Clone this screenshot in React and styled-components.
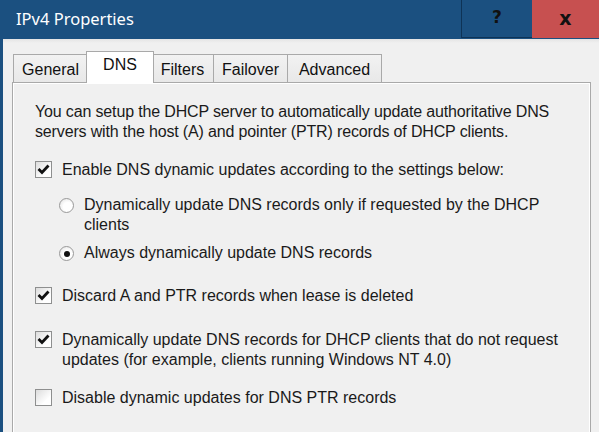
import React from 'react';
import styled, { createGlobalStyle } from 'styled-components';

const GlobalStyle = createGlobalStyle`
  html, body {
    margin: 0;
    padding: 0;
  }
  body {
    font-family: "Liberation Sans", Arial, sans-serif;
    background: #f0f0f0;
  }
`;

const TABS = ['General', 'DNS', 'Filters', 'Failover', 'Advanced'];
const TAB_WIDTHS = [75, 68, 63, 75, 95];

const App = () => {
  return (
    <StyledWindow>
      <GlobalStyle />
      <StyledTitleBar>
        <StyledTitle>IPv4 Properties</StyledTitle>
        <StyledCaptionButton $width={71}>?</StyledCaptionButton>
        <StyledCaptionButton $width={67} $close>
          x
        </StyledCaptionButton>
      </StyledTitleBar>

      <StyledBody>
        <StyledTabStrip>
          {TABS.map((tab, i) => (
            <StyledTab key={tab} $width={TAB_WIDTHS[i]} $selected={tab === 'DNS'}>
              {tab}
            </StyledTab>
          ))}
        </StyledTabStrip>

        <StyledPanel>
          <StyledText>
            You can setup the DHCP server to automatically update authoritative DNS
            <br />
            servers with the host (A) and pointer (PTR) records of DHCP clients.
          </StyledText>

          <StyledOption $top={18}>
            <Checkbox checked />
            <StyledLabel>Enable DNS dynamic updates according to the settings below:</StyledLabel>
          </StyledOption>

          <StyledOption $top={15} $indent>
            <Radio />
            <StyledLabel>
              Dynamically update DNS records only if requested by the DHCP
              <br />
              clients
            </StyledLabel>
          </StyledOption>

          <StyledOption $top={8} $indent>
            <Radio checked />
            <StyledLabel>Always dynamically update DNS records</StyledLabel>
          </StyledOption>

          <StyledOption $top={23}>
            <Checkbox checked />
            <StyledLabel>Discard A and PTR records when lease is deleted</StyledLabel>
          </StyledOption>

          <StyledOption $top={24}>
            <Checkbox checked />
            <StyledLabel>
              Dynamically update DNS records for DHCP clients that do not request
              <br />
              updates (for example, clients running Windows NT 4.0)
            </StyledLabel>
          </StyledOption>

          <StyledOption $top={18}>
            <Checkbox />
            <StyledLabel>Disable dynamic updates for DNS PTR records</StyledLabel>
          </StyledOption>
        </StyledPanel>
      </StyledBody>
    </StyledWindow>
  );
};

const Checkbox = ({ checked }) => (
  <StyledCheckbox>
    {checked && (
      <svg width="13" height="13" viewBox="0 0 13 13">
        <path d="M1.5 6 L5 9.5 L11.5 2.5" fill="none" stroke="#111" strokeWidth="2.8" />
      </svg>
    )}
  </StyledCheckbox>
);

const Radio = ({ checked }) => (
  <StyledRadio>{checked && <StyledDot />}</StyledRadio>
);

const StyledWindow = styled.div`
  width: 596px;
  height: 432px;
  border-left: 3px solid #1b5080;
  display: flex;
  flex-direction: column;
  overflow: hidden;
  background: #f0f0f0;
`;

const StyledTitleBar = styled.div`
  height: 39px;
  flex-shrink: 0;
  display: flex;
  align-items: stretch;
  background: #1b5080;
`;

const StyledTitle = styled.div`
  flex: 1;
  display: flex;
  align-items: center;
  padding-left: 13px;
  padding-bottom: 2px;
  color: #fff;
  font-family: "Noto Sans", "Open Sans", sans-serif;
  font-size: 16.5px;
`;

const StyledCaptionButton = styled.div`
  width: ${(p) => p.$width}px;
  height: 38px;
  box-sizing: border-box;
  display: flex;
  align-items: center;
  justify-content: center;
  font-family: "DejaVu Sans", sans-serif;
  font-weight: bold;
  font-size: ${(p) => (p.$close ? '19px' : '17px')};
  color: #111;
  background: ${(p) => (p.$close ? '#c75050' : '#1b5080')};
  border-left: ${(p) => (p.$close ? 'none' : '1px solid #0e3356')};
  border-bottom: ${(p) => (p.$close ? 'none' : '1px solid #0e3356')};
  padding-bottom: 3px;
`;

const StyledBody = styled.div`
  flex: 1;
  display: flex;
  flex-direction: column;
  padding: 12px 8px 0 9px;
  background: linear-gradient(#e4e4e4 0, #f0f0f0 4px);
`;

const StyledTabStrip = styled.div`
  display: flex;
  align-items: flex-end;
  height: 32px;
  position: relative;
  z-index: 1;
  margin-bottom: -1px;
  padding-left: 1px;
`;

const StyledTab = styled.div`
  width: ${(p) => p.$width}px;
  height: ${(p) => (p.$selected ? 32 : 29)}px;
  box-sizing: border-box;
  margin: 0 ${(p) => (p.$selected ? -2 : 0)}px 0 ${(p) => (p.$selected ? -2 : -1)}px;
  position: relative;
  z-index: ${(p) => (p.$selected ? 2 : 0)};
  display: flex;
  align-items: center;
  justify-content: center;
  padding-top: ${(p) => (p.$selected ? 0 : 3)}px;
  padding-bottom: ${(p) => (p.$selected ? 5 : 0)}px;
  font-size: 16px;
  color: #111;
  border: 1px solid #a9a9a9;
  border-bottom: ${(p) => (p.$selected ? 'none' : '1px solid #a9a9a9')};
  background: ${(p) => (p.$selected ? '#fff' : 'linear-gradient(#f2f2f2, #e8e8e8)')};
  &:first-child {
    margin-left: 0;
  }
`;

const StyledPanel = styled.div`
  flex: 1;
  border: 1px solid #a9a9a9;
  border-bottom: none;
  box-shadow: inset 1px 1px 0 #fff, inset -1px 0 0 #fff;
  background: #f0f0f0;
  padding: 19px 10px 0 22px;
  display: flex;
  flex-direction: column;
  color: #1a1a1a;
  font-size: 16px;
  line-height: 20px;
`;

const StyledText = styled.div`
  white-space: nowrap;
  letter-spacing: -0.15px;
`;

const StyledOption = styled.div`
  display: flex;
  align-items: flex-start;
  margin-top: ${(p) => p.$top}px;
  padding-left: ${(p) => (p.$indent ? 24 : 0)}px;
`;

const StyledLabel = styled.div`
  white-space: nowrap;
  margin-left: 10px;
`;

const StyledCheckbox = styled.div`
  width: 17px;
  height: 17px;
  box-sizing: border-box;
  flex-shrink: 0;
  margin-top: 1px;
  border: 1px solid #8e8f8f;
  background: linear-gradient(135deg, #dcdcdc, #ffffff 70%);
  display: flex;
  align-items: center;
  justify-content: center;
`;

const StyledRadio = styled.div`
  width: 15px;
  height: 15px;
  box-sizing: border-box;
  flex-shrink: 0;
  margin-top: 3px;
  border-radius: 50%;
  border: 1px solid #9a9a9a;
  background: radial-gradient(circle at 60% 60%, #ffffff 40%, #dedede);
  display: flex;
  align-items: center;
  justify-content: center;
`;

const StyledDot = styled.div`
  width: 6px;
  height: 6px;
  border-radius: 50%;
  background: #111;
`;

export default App;
